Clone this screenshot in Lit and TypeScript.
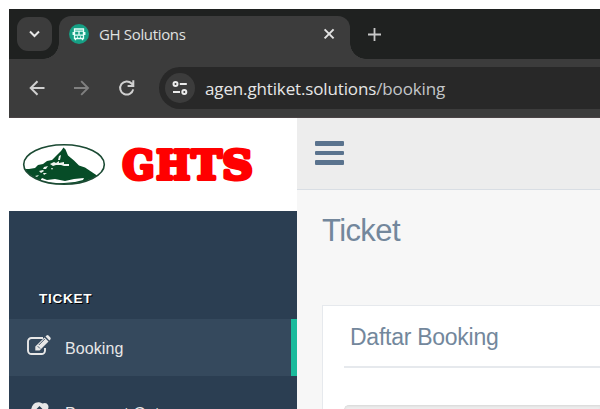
import { LitElement, html, css, svg } from "lit";
import { customElement } from "lit/decorators.js";

@customElement("browser-chrome")
class BrowserChrome extends LitElement {
  static styles = css`
    :host { display: block; height: 109px; background: #3c3c3c; font-family: "Open Sans", "Noto Sans", sans-serif; }
    svg { display: block; flex: none; }
    .tabs { display: flex; height: 50px; background: #1f2120; }
    .search { flex: none; width: 35px; height: 34px; margin: 8px 0 0 8px; border-radius: 11px; background: #3c3c3c; }
    .tab { position: relative; box-sizing: border-box; display: flex; align-items: center; width: 291px; height: 43px; margin: 7px 0 0 7px; padding: 0 13px 7px 10px; border-radius: 12px 12px 0 0; background: #3c3c3c; }
    .tab::before, .tab::after { content: ""; position: absolute; bottom: 0; width: 16px; height: 16px; }
    .tab::before { left: -16px; background: radial-gradient(circle at 0 0, transparent 15.5px, #3c3c3c 16px); }
    .tab::after { right: -16px; background: radial-gradient(circle at 100% 0, transparent 15.5px, #3c3c3c 16px); }
    .title { margin-left: 10px; font-size: 15px; line-height: 20px; color: #e0e2e1; letter-spacing: -0.34px; flex: 1; white-space: nowrap; }
    .plus { margin: 18px 0 0 17px; }
    .bar { display: flex; align-items: center; height: 59px; padding-left: 18px; box-sizing: border-box; border-bottom: 1px solid #4a4345; }
    .nav { display: flex; gap: 25px; }
    .omni { flex: 1; display: flex; align-items: center; height: 42px; margin-left: 22px; padding-left: 6px; border-radius: 21px 0 0 21px; background: #282828; }
    .site { width: 30px; height: 30px; border-radius: 50%; background: #3c3c3c; }
    .url { margin-left: 10px; padding-top: 2px; font-size: 17px; line-height: 24px; color: #e6e6e6; white-space: nowrap; letter-spacing: -0.14px; }
    .path { color: #c3c6c9; }
  `;
  render() {
    return html`
      <div class="tabs">
        <div class="search"><svg width="35" height="34" fill="none" stroke="#e8e8e8" stroke-width="2"><path d="M13 14.5l4.5 4.5 4.5-4.5"/></svg></div>
        <div class="tab">
          <svg width="20" height="20" fill="none" stroke="#e8fff9" stroke-width="1.3">
            <circle cx="10" cy="10" r="10" fill="#16a085" stroke="none"/>
            <path d="M5.500 5h9v9.500h-9zM5.500 7.200h9M5.500 11.200h9M10 7.200v4M4.200 8v3M15.800 8v3M6.500 14.500v1.700M13.500 14.500v1.700M8 13h.8M11.200 13h.8"/>
          </svg>
          <span class="title">GH Solutions</span>
          <svg width="16" height="16" viewBox="0 0 16 16" fill="none" stroke="#e2e2e2" stroke-width="2"><path d="M3.600 3.400l9 9M12.600 3.400l-9 9"/></svg>
        </div>
        <svg class="plus" width="15" height="15" fill="none" stroke="#c8c8c8" stroke-width="1.800"><path d="M7.500 1v13M1 7.500h13"/></svg>
      </div>
      <div class="bar">
        <div class="nav">
          <svg width="20" height="20" fill="none" stroke="#d0d0d0" stroke-width="2"><path d="M17.500 10H4M10.500 3.200L3.700 10l6.800 6.800"/></svg>
          <svg width="20" height="20" fill="none" stroke="#808080" stroke-width="1.900"><path d="M2 10h13M9.200 3.200L16 10l-6.800 6.800"/></svg>
          <svg width="20" height="20" fill="none" stroke="#d0d0d0" stroke-width="2"><path d="M16.200 11.400A6.600 6.600 0 1 1 14.600 5.500L16 7.200M16.300 2.300V8h-5.700"/></svg>
        </div>
        <div class="omni">
          <div class="site"><svg width="30" height="30" fill="none" stroke="#ececec" stroke-width="2"><circle cx="10.500" cy="11" r="2"/><path d="M14.800 11h7M8 19h7"/><circle cx="19.300" cy="19" r="2"/></svg></div>
          <span class="url">agen.ghtiket.solutions<span class="path">/booking</span></span>
        </div>
      </div>`;
  }
}

@customElement("side-menu")
class SideMenu extends LitElement {
  static styles = css`
    :host { display: block; width: 288px; height: 100%; overflow: hidden; background: #2b3e52; color: #e7e7e7; font-family: "Liberation Sans", Arial, sans-serif; }
    .logo { display: block; width: 288px; height: 93px; background: #fff; }
    .word { font: bold 40px "DejaVu Serif", serif; }
    h3 { margin: 78px 0 0 30px; height: 30px; line-height: 19px; font-size: 13.5px; letter-spacing: 0.75px; color: #fff; text-shadow: 1px 1px #000; }
    .item { box-sizing: border-box; display: flex; align-items: center; height: 57px; padding-left: 18px; font-size: 16px; }
    .item span { margin-left: 12px; padding-top: 2px; white-space: nowrap; letter-spacing: 0.1px; }
    .active { background: #35495d; border-right: 6px solid #1abb9c; }
    .next { margin-top: 8px; }
    .item svg { display: block; flex: none; }
    .active svg { margin: -3px 1px 0 -1px; }
  `;
  letter(ch: string, x: number, w: number) {
    return svg`<text class="word" x=${x} y="61.300" textLength=${w} lengthAdjust="spacingAndGlyphs" fill="#f00" stroke="#f00" stroke-width="4" stroke-linejoin="round">${ch}</text>`;
  }
  render() {
    return html`
      <svg class="logo" viewBox="0 0 288 93">
        <clipPath id="oval"><ellipse cx="55" cy="46.500" rx="40" ry="19.500"/></clipPath>
        <g clip-path="url(#oval)">
          <path d="M12 51l8 0 6-1 3-3 5-1 4-3 5-1 5-5 4-4 2.500-3.500 2 2 2.500 6 6 5 5 5 6 2 6 4 6 4 6 2v12H12z" fill="#064c27"/>
          <path d="M31 63l2-3 5 2 8-1 10 2 9-2 10-1-1 2-8 2-11 1H42z" fill="#fff"/>
          <path d="M50 38l2-1-1 5-2 0zM41 46l4-2 2 1 3-2 0 2 5-1 0 2 5 0 0 2-5 0-3-1-5 0-3 1zM35 49l4-1-2 3-3 0zM30 53l4-1 1 1-3 2zM26 58l4-1-2 2zM42 50h2l-1 2zM34 55l4 0-3 2z" fill="#eef3ef"/>
        </g>
        <ellipse cx="55" cy="46.500" rx="40.300" ry="19.700" fill="none" stroke="#1b4a33" stroke-width="1.600"/>
        ${this.letter("G", 113.5, 32)}${this.letter("H", 147.2, 34)}${this.letter("T", 182.4, 30.2)}${this.letter("S", 213.3, 30.5)}
      </svg>
      <h3>TICKET</h3>
      <div class="item active">
        <svg width="26" height="26" viewBox="0 0 26 26"><path d="M17 5H5.500A3.500 3.500 0 0 0 2 8.500v9A3.500 3.500 0 0 0 5.500 21h10a3.500 3.500 0 0 0 3.500-3.500V15" fill="none" stroke="#e7e7e7" stroke-width="1.900"/><path d="M18.500 4.500l4 4-9 9H9.300v-4zM19.500 3.500l1-1q1-.8 2 0l1.900 1.900q.8 1 0 2l-1 1z" fill="#e7e7e7"/><path d="M11.700 13.200l2.300 2.300M12.800 12l6-6" stroke="#35495d" stroke-width=".9"/></svg>
        <span>Booking</span>
      </div>
      <div class="item next">
        <svg width="26" height="26" viewBox="0 0 26 26"><path d="M2 15a6 6 0 0 1 2.500-6.500A7 7 0 0 1 15.500 3.500q4-1.500 5.500 1.500 1 2 0 4a6 6 0 0 1 0 10H7q-4 0-5-4z" fill="#e7e7e7"/><path d="M12.500 6l-6 6h4v5h4v-5h4z" fill="#2b3e52"/></svg>
        <span>Payment Gateway</span>
      </div>`;
  }
}

@customElement("app-root")
class AppRoot extends LitElement {
  static styles = css`
    :host { display: block; box-sizing: border-box; width: 600px; height: 409px; padding: 9px 0 0 9px; overflow: hidden; background: #fff; font-family: "Liberation Sans", Arial, sans-serif; color: #73879c; }
    .page { display: flex; height: 291px; }
    main { flex: 1; min-width: 0; background: #f7f7f7; overflow: hidden; }
    .top { box-sizing: border-box; height: 72px; padding: 23px 0 0 18px; background: #ededed; border-bottom: 1px solid #d9dee4; }
    .burger { display: flex; flex-direction: column; gap: 5px; width: 29px; }
    .burger i { height: 4.700px; border-radius: 1px; background: #5a738e; }
    h1 { margin: 22px 0 0 25px; font-size: 31px; line-height: 38px; font-weight: 400; letter-spacing: -0.6px; }
    .panel { margin: 55px 0 0 25px; height: 130px; background: #fff; border: 1px solid #e6e9ed; border-right: 0; padding-left: 21px; }
    h2 { margin: 0; box-sizing: border-box; height: 62px; padding: 14px 0 0 6px; border-bottom: 2px solid #e6e9ed; font-size: 23px; line-height: 34px; font-weight: 400; letter-spacing: -0.26px; }
    .field { margin-top: 37px; height: 40px; border: 1px solid #ddd; border-right: 0; border-radius: 5px 0 0 0; background: #eee; box-shadow: inset 0 1px 2px #e2e2e2; }
  `;
  render() {
    return html`
      <browser-chrome></browser-chrome>
      <div class="page">
        <side-menu></side-menu>
        <main>
          <div class="top"><div class="burger"><i></i><i></i><i></i></div></div>
          <h1>Ticket</h1>
          <section class="panel"><h2>Daftar Booking</h2><div class="field"></div></section>
        </main>
      </div>`;
  }
}
